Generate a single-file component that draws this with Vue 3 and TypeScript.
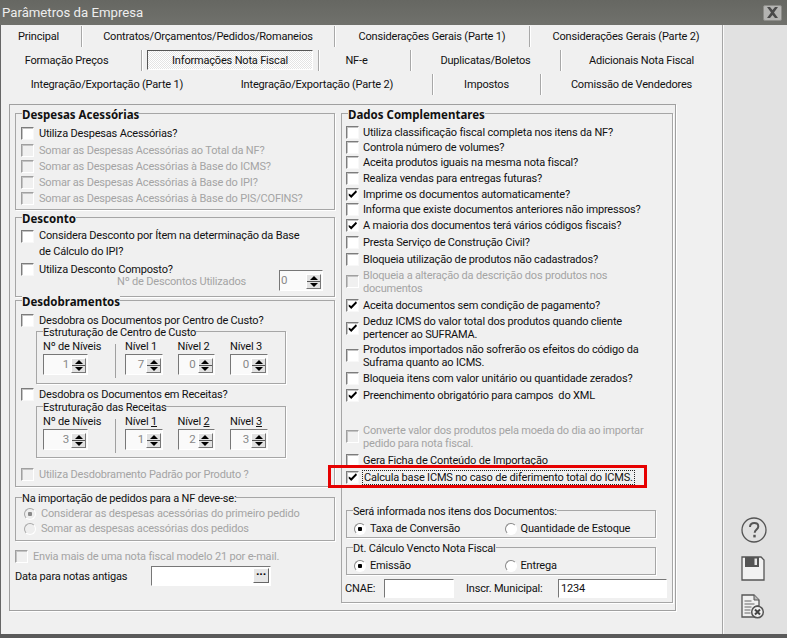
<script setup lang="ts">
interface TabCell { t: string; w: number; sel?: boolean; shift?: number }
interface Opt { t: string[]; h: number; on?: boolean; off?: boolean; focus?: boolean; gap?: boolean }

const tabRows: TabCell[][] = [
  [{ t: 'Principal', w: 81, shift: -2 }, { t: 'Contratos/Orçamentos/Pedidos/Romaneios', w: 253 }, { t: 'Considerações Gerais (Parte 1)', w: 195 }, { t: 'Considerações Gerais (Parte 2)', w: 193 }],
  [{ t: 'Formação Preços', w: 141, shift: -4 }, { t: 'Informações Nota Fiscal', w: 177, sel: true }, { t: 'NF-e', w: 92, shift: -8 }, { t: 'Duplicatas/Boletos', w: 150 }, { t: 'Adicionais Nota Fiscal', w: 162 }],
  [{ t: 'Integração/Exportação (Parte 1)', w: 214 }, { t: 'Integração/Exportação (Parte 2)', w: 218, shift: -6 }, { t: 'Impostos', w: 108 }, { t: 'Comissão de Vendedores', w: 182 }],
]

const despesas: Opt[] = [
  { t: ['Utiliza Despesas Acessórias?'], h: 17 },
  { t: ['Somar as Despesas Acessórias ao Total da NF?'], h: 16, off: true },
  { t: ['Somar as Despesas Acessórias à Base do ICMS?'], h: 16, off: true },
  { t: ['Somar as Despesas Acessórias à Base do IPI?'], h: 16, off: true },
  { t: ['Somar as Despesas Acessórias à Base do PIS/COFINS?'], h: 16, off: true },
]

const dados: Opt[] = [
  { t: ['Utiliza classificação fiscal completa nos itens da NF?'], h: 16 },
  { t: ['Controla número de volumes?'], h: 15 },
  { t: ['Aceita produtos iguais na mesma nota fiscal?'], h: 15 },
  { t: ['Realiza vendas para entregas futuras?'], h: 16 },
  { t: ['Imprime os documentos automaticamente?'], h: 16, on: true },
  { t: ['Informa que existe documentos anteriores não impressos?'], h: 15 },
  { t: ['A maioria dos documentos terá vários códigos fiscais?'], h: 17, on: true },
  { t: ['Presta Serviço de Construção Civil?'], h: 17 },
  { t: ['Bloqueia utilização de produtos não cadastrados?'], h: 17 },
  { t: ['Bloqueia a alteração da descrição dos produtos nos', 'documentos'], h: 27, off: true },
  { t: ['Aceita documentos sem condição de pagamento?'], h: 20, on: true },
  { t: ['Deduz ICMS do valor total dos produtos quando cliente', 'pertencer ao SUFRAMA.'], h: 26, on: true },
  { t: ['Produtos importados não sofrerão os efeitos do código da', 'Suframa quanto ao ICMS.'], h: 29 },
  { t: ['Bloqueia itens com valor unitário ou quantidade zerados?'], h: 16 },
  { t: ['Preenchimento obrigatório para campos  do XML'], h: 18, on: true },
  { t: [], h: 18, gap: true },
  { t: ['Converte valor dos produtos pela moeda do dia ao importar', 'pedido para nota fiscal.'], h: 29, off: true },
  { t: ['Gera Ficha de Conteúdo de Importação'], h: 18 },
  { t: ['Calcula base ICMS no caso de diferimento total do ICMS.'], h: 16, on: true, focus: true },
]

const centro = [
  { l: 'Nº de Níveis', d: '', v: '1', cls: 'sp-a' },
  { l: 'Nível ', d: '1', v: '7', cls: 'sp-b' },
  { l: 'Nível ', d: '2', v: '0', cls: 'sp-c' },
  { l: 'Nível ', d: '3', v: '0', cls: 'sp-b' },
]
const receitas = [
  { l: 'Nº de Níveis', d: '', v: '3', cls: 'sp-a' },
  { l: 'Nível ', d: '1', v: '1', cls: 'sp-b' },
  { l: 'Nível ', d: '2', v: '2', cls: 'sp-c' },
  { l: 'Nível ', d: '3', v: '3', cls: 'sp-b' },
]
</script>

<template>
  <div class="app">
    <header class="title">
      <span class="title-text">Parâmetros da Empresa</span>
      <span class="close">
        <svg width="13" height="11" viewBox="0 0 13 11"><path d="M1 0h3l2.500 3L9 0h3L8 5.500 12 11H9L6.500 8 4 11H1l4-5.500z" fill="#4a4a4a" /></svg>
      </span>
    </header>

    <div class="body">
      <main class="main">
        <nav class="tabs">
          <div v-for="(row, i) in tabRows" :key="i" class="tab-row">
            <div
              v-for="(c, j) in row"
              :key="c.t"
              class="tab"
              :class="{ sep: j > 0 && !(i === 2 && j === 1) }"
              :style="{ width: c.w + 'px', paddingRight: (c.shift ? -c.shift * 2 : 0) + 'px' }"
            >
              <span :class="{ 'tab-sel': c.sel }">{{ c.t }}</span>
            </div>
          </div>
        </nav>

        <section class="panel">
          <div class="col-left">
            <div class="group g-desp">
              <div class="legend bold">Despesas Acessórias</div>
              <div v-for="o in despesas" :key="o.t[0]" class="row" :class="{ off: o.off }" :style="{ height: o.h + 'px' }">
                <span class="cb" /><span>{{ o.t[0] }}</span>
              </div>
            </div>

            <div class="group g-desc">
              <div class="legend bold">Desconto</div>
              <div class="row two">
                <span class="cb" />
                <span>Considera Desconto por Ítem na determinação da Base<br />de Cálculo do IPI?</span>
              </div>
              <div class="desc-foot">
                <div class="desc-left">
                  <div class="row h16"><span class="cb" /><span>Utiliza Desconto Composto?</span></div>
                  <div class="desc-label off">Nº de Descontos Utilizados</div>
                </div>
                <div class="spin sp-d off-v"><span class="spin-v left">0</span><span class="spin-b"><i class="up" /><i class="dn" /></span></div>
              </div>
            </div>

            <div class="group g-dob">
              <div class="legend bold">Desdobramentos</div>
              <div class="row h16 mt3"><span class="cb" /><span>Desdobra os Documentos por Centro de Custo?</span></div>
              <div class="group sub s1">
                <div class="legend">Estruturação de Centro de Custo</div>
                <div class="levels">
                  <template v-for="(c, i) in centro" :key="i">
                    <div v-if="i === 1" class="vline" />
                    <div class="level">
                      <div class="level-l">{{ c.l }}{{ c.d }}</div>
                      <div class="spin off-v" :class="c.cls"><span class="spin-v">{{ c.v }}</span><span class="spin-b"><i class="up" /><i class="dn" /></span></div>
                    </div>
                  </template>
                </div>
              </div>
              <div class="row h16 mt2"><span class="cb" /><span>Desdobra os Documentos em Receitas?</span></div>
              <div class="group sub s2">
                <div class="legend">Estruturação das Receitas</div>
                <div class="levels">
                  <template v-for="(c, i) in receitas" :key="i">
                    <div v-if="i === 1" class="vline" />
                    <div class="level">
                      <div class="level-l">{{ c.l }}<u>{{ c.d }}</u></div>
                      <div class="spin off-v" :class="c.cls"><span class="spin-v">{{ c.v }}</span><span class="spin-b"><i class="up" /><i class="dn" /></span></div>
                    </div>
                  </template>
                </div>
              </div>
              <div class="row h16 mt8 off"><span class="cb" /><span>Utiliza Desdobramento Padrão por Produto ?</span></div>
            </div>

            <div class="group g-imp">
              <div class="legend">Na importação de pedidos para a NF deve-se:</div>
              <div class="row h15 off rad"><span class="rb on" /><span>Considerar as despesas acessórias do primeiro pedido</span></div>
              <div class="row h15 off rad"><span class="rb" /><span>Somar as despesas acessórias dos pedidos</span></div>
            </div>

            <div class="row h16 envia off"><span class="cb" /><span>Envia mais de uma nota fiscal modelo 21 por e-mail.</span></div>
            <div class="data-row">
              <span class="data-l">Data para notas antigas</span>
              <span class="date"><span class="dots">···</span></span>
            </div>
          </div>

          <div class="col-right">
            <div class="group g-dados">
              <div class="legend bold">Dados Complementares</div>
              <div class="dados-list">
                <div v-for="(o, i) in dados" :key="i" class="row r" :class="{ off: o.off }" :style="{ height: o.h + 'px' }">
                  <template v-if="!o.gap">
                    <span class="cb" :class="{ on: o.on }" />
                    <span class="lines" :class="{ focus: o.focus }"><span v-for="l in o.t" :key="l" class="line">{{ l }}</span></span>
                  </template>
                </div>
              </div>

              <div class="group rad-g first">
                <div class="legend">Será informada nos itens dos Documentos:</div>
                <div class="rad-row">
                  <span class="rad-i"><span class="rb on" />Taxa de Conversão</span>
                  <span class="rad-i"><span class="rb" />Quantidade de Estoque</span>
                </div>
              </div>
              <div class="group rad-g second">
                <div class="legend">Dt. Cálculo Vencto Nota Fiscal</div>
                <div class="rad-row">
                  <span class="rad-i"><span class="rb on" />Emissão</span>
                  <span class="rad-i"><span class="rb" />Entrega</span>
                </div>
              </div>
              <div class="fields">
                <span class="lab-a">CNAE:</span><span class="field f-a" />
                <span class="lab-b">Inscr. Municipal:</span><span class="field f-b">1234</span>
              </div>
            </div>
          </div>
        </section>
      </main>

      <aside class="side">
        <svg class="ic-help" width="26" height="26" viewBox="0 0 26 26">
          <circle cx="13" cy="13" r="12" fill="none" stroke="#555" stroke-width="1.300" />
          <path d="M9 10c0-2.600 1.800-4 4.200-4 2.500 0 4.100 1.400 4.100 3.400 0 3-3.600 3-3.600 6.300" fill="none" stroke="#555" stroke-width="2" />
          <rect x="12.300" y="17.800" width="2.400" height="2.600" fill="#555" />
        </svg>
        <svg class="ic-save" width="24" height="25" viewBox="0 0 24 25">
          <path d="M1 1h19l3 3v20H1z" fill="#f2f2f2" stroke="#555" stroke-width="1.300" />
          <path d="M4 1h14v10H4z" fill="#555" />
          <rect x="13.500" y="2.500" width="2.500" height="6.500" fill="#e8e8e8" />
        </svg>
        <svg class="ic-doc" width="24" height="25" viewBox="0 0 24 25">
          <path d="M1 1h12l5 5v6a6 6 0 0 0-4 11H1z" fill="#f0f0f0" stroke="#555" stroke-width="1.300" />
          <path d="M13 1v5h5" fill="#bbb" stroke="#555" />
          <path d="M3.500 7h7M3.500 10h10M3.500 13h7M3.500 16h6M3.500 19h6" stroke="#666" stroke-width="1" />
          <circle cx="16.500" cy="18" r="5.800" fill="#f0f0f0" stroke="#555" stroke-width="1.500" />
          <path d="M14 15.500l5 5M19 15.500l-5 5" stroke="#444" stroke-width="2" />
        </svg>
      </aside>
    </div>

    <div class="foot" />
    <div class="redbox" />
  </div>
</template>

<style>
html, body { margin: 0; background: #f0f0f0; }
</style>

<style scoped>
.app {
  position: relative;
  width: 787px;
  height: 638px;
  overflow: hidden;
  display: flex;
  flex-direction: column;
  background: #f0f0f0;
  font-family: Roboto, "Noto Sans", sans-serif;
  font-size: 11px;
  letter-spacing: -0.180px;
  line-height: 13px;
  color: #111;
  white-space: nowrap;
}
.title {
  height: 25px;
  flex: none;
  display: flex;
  align-items: center;
  justify-content: space-between;
  padding: 0 5px 0 2px;
  background: linear-gradient(#666762, #70716c);
}
.title-text { color: #eee; font-size: 13.200px; letter-spacing: 0; line-height: 16px; }
.close {
  width: 19px;
  height: 16px;
  display: flex;
  align-items: center;
  justify-content: center;
  background: #b4b4b2;
  border: 1px solid #8c8c88;
  border-radius: 2px;
  box-sizing: border-box;
}
.body { flex: 1; display: flex; min-height: 0; border-left: 1px solid #666; }
.main { width: 721px; flex: none; }
.side {
  flex: 1;
  border-left: 1px solid #a5a5a5;
  box-shadow: inset 1px 0 0 #fafafa;
  background: #e1e1e1;
  display: flex;
  flex-direction: column;
  align-items: flex-start;
  padding: 492px 0 0 18px;
}
.ic-save { margin-top: 13px; }
.ic-doc { margin-top: 13px; }
.foot { height: 4px; flex: none; background: #5a5a5a; }

.tabs { padding-top: 1px; display: flex; flex-direction: column; gap: 3px; }
.tab-row { display: flex; height: 21px; margin-left: -1px; }
.tab {
  box-sizing: border-box;
  flex: none;
  display: flex;
  align-items: center;
  justify-content: center;
}
.sep { border-left: 1px solid #a8a8a8; box-shadow: inset 1px 0 0 #fff; }
.tab-sel {
  box-sizing: border-box;
  width: 166px;
  height: 20px;
  display: flex;
  align-items: center;
  justify-content: center;
  margin-top: -1px;
  border: 1px solid;
  border-color: #555 #fff #fff #555;
  background: repeating-conic-gradient(#e4e4e4 0 25%, #fff 0 50%) 0 0 / 2px 2px;
}

.panel {
  box-sizing: border-box;
  margin: 9px 0 0 8px;
  width: 667px;
  height: 507px;
  border: 1px solid #a0a0a0;
  box-shadow: 1px 1px 0 #fff;
  padding: 8px 0 0 5px;
  display: flex;
  gap: 6px;
}
.col-left { width: 320px; flex: none; }
.col-right { width: 332px; flex: none; }

.group {
  box-sizing: border-box;
  border: 1px solid #a6a6a6;
  box-shadow: 1px 1px 0 #fff;
}
.legend {
  height: 14px;
  line-height: 13px;
  margin: -6px 0 0 6px;
  width: fit-content;
  background: #f0f0f0;
}
.bold { font-family: "Noto Sans", sans-serif; font-weight: 700; font-size: 11.500px; letter-spacing: 0; }
.g-desp { height: 97px; margin-bottom: 7px; }
.g-desp .legend { margin-bottom: 3px; }
.g-desc { height: 80px; margin-bottom: 3px; }
.g-dob { height: 187px; margin-bottom: 10px; }
.g-imp { height: 44px; }

.row { display: flex; align-items: center; gap: 5px; padding-left: 5px; }
.h16 { height: 16px; }
.h15 { height: 15px; }
.mt2 { margin-top: 2px; }
.mt3 { margin-top: 3px; }
.mt8 { margin-top: 8px; }
.two { align-items: flex-start; margin-top: 2px; line-height: 16px; height: 33px; }
.two .cb { margin-top: 2px; }
.off { color: #a4a4a4; }

.cb {
  box-sizing: border-box;
  position: relative;
  width: 13px;
  height: 13px;
  flex: none;
  background: #fff;
  border: 1px solid;
  border-color: #7c7c7c #f8f8f8 #f8f8f8 #7c7c7c;
  box-shadow: inset 1px 1px 0 #c4c4c4;
}
.off .cb { background: #f0f0f0; border-color: #a0a0a0 #fff #fff #a0a0a0; }
.cb.on::after {
  content: "";
  position: absolute;
  inset: 1px;
  background: #000;
  clip-path: polygon(8% 45%, 36% 62%, 88% 8%, 100% 28%, 36% 95%, 8% 68%);
}
.rb {
  box-sizing: border-box;
  display: inline-block;
  width: 12px;
  height: 12px;
  flex: none;
  border-radius: 50%;
  border: 1px solid;
  border-color: #888 #fff #fff #888;
  background: #fff;
}
.rb.on { background: radial-gradient(circle, #000 0 2px, #fff 2.500px); }
.off .rb { background: #eee; border-color: #a8a8a8 #fff #fff #a8a8a8; }
.off .rb.on { background: radial-gradient(circle, #8a8a8a 0 2px, #eee 2.500px); }

.desc-foot { display: flex; justify-content: space-between; padding-right: 11px; }
.desc-left { width: 230px; }
.desc-label { text-align: right; margin-top: -2px; line-height: 14px; }
.sp-d { width: 44px; margin-top: 9px; }

.spin {
  box-sizing: border-box;
  height: 21px;
  display: flex;
  border: 1px solid;
  border-color: #777 #fff #fff #777;
  background: #fafafa;
  color: #888;
}
.sp-a { width: 45px; }
.sp-b { width: 38px; }
.sp-c { width: 37px; }
.spin-v { flex: 1; text-align: right; padding-right: 2px; line-height: 18px; font-size: 11.500px; }
.spin-v.left { text-align: left; padding-left: 1px; }
.spin-b {
  width: 15px;
  height: 15px;
  margin: 3px 1px 0 0;
  background: linear-gradient(#e2e2e2 0 6px, #555 6px 7px, #e2e2e2 7px);
  border: 1px solid;
  border-color: #fff #777 #777 #fff;
  box-sizing: border-box;
  display: flex;
  flex-direction: column;
  align-items: center;
  gap: 3px;
  padding-top: 1px;
}
.spin-b i { display: block; width: 0; height: 0; border-left: 4px solid transparent; border-right: 4px solid transparent; }
.spin-b .up { border-bottom: 4px solid #000; }
.spin-b .dn { border-top: 4px solid #000; }

.sub { margin-left: 20px; width: 250px; }
.s1 { height: 53px; margin-top: 3px; }
.s2 { height: 52px; margin-top: 4px; }
.levels { display: flex; padding-left: 6px; }
.level-l { height: 14px; line-height: 14px; }
.level { width: 52.500px; }
.vline { width: 10px; flex: none; margin-top: 4px; height: 34px; border-left: 1px solid #a0a0a0; box-sizing: border-box; }
.levels .level:first-child { width: 72px; flex: none; }

.rad { gap: 5px; padding-left: 8px; }
.envia { margin-top: 7px; padding-left: 0; }
.data-row { display: flex; align-items: center; height: 20px; margin-top: 2px; }
.data-l { width: 136px; }
.date {
  box-sizing: border-box;
  width: 120px;
  height: 20px;
  background: #fff;
  border: 1px solid;
  border-color: #777 #fff #fff #777;
  display: flex;
  justify-content: flex-end;
  padding: 1px 1px 2px 0;
}
.dots {
  width: 16px;
  background: #e6e6e6;
  border: 1px solid;
  border-color: #fff #666 #666 #fff;
  box-sizing: border-box;
  text-align: center;
  font-weight: 900;
  line-height: 12px;
  color: #000;
}

.g-dados { height: 490px; }
.g-dados .legend { margin-bottom: 2px; }
.r { gap: 4px; padding-left: 4px; }
.lines { display: flex; flex-direction: column; line-height: 13px; }
.line { display: block; white-space: pre; }
.focus { outline: 1px dotted #222; padding: 0 1px; }

.rad-g { width: 310px; height: 28px; margin-left: 4px; }
.first { margin-top: 25px; }
.second { margin-top: 9px; }
.rad-row { display: flex; height: 15px; align-items: center; padding-left: 7px; }
.rad-i { display: flex; align-items: center; gap: 4px; width: 151px; }
.fields { display: flex; align-items: center; height: 19px; margin: 4px 0 0 3px; }
.field {
  box-sizing: border-box;
  height: 19px;
  background: #fff;
  border: 1px solid;
  border-color: #777 #fff #fff #777;
  line-height: 17px;
  padding-left: 2px;
}
.lab-a { width: 39px; }
.f-a { width: 70px; }
.lab-b { margin-left: 12px; width: 92px; }
.f-b { width: 109px; }

.redbox {
  position: absolute;
  left: 328px;
  top: 465px;
  width: 319px;
  height: 23px;
  box-sizing: border-box;
  border: 3px solid #e60000;
}
</style>
